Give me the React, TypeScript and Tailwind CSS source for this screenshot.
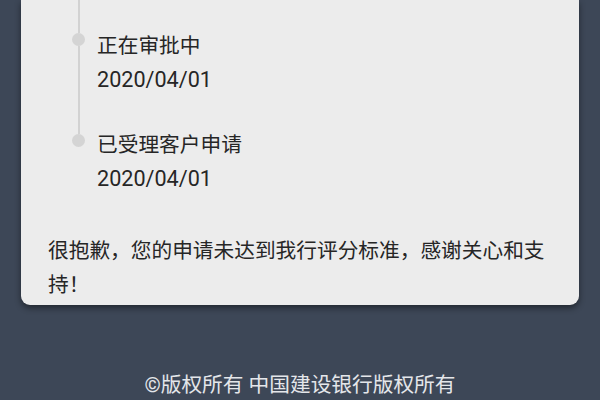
import React from "react";

const items = [
  { title: "正在审批中", date: "2020/04/01" },
  { title: "已受理客户申请", date: "2020/04/01" },
];

export default function App() {
  return (
    <div
      className="w-[600px] h-[400px] overflow-hidden bg-[#3d4757] flex flex-col"
      style={{ fontFamily: 'Roboto, "Noto Sans CJK SC", "Noto Sans", sans-serif' }}
    >
      <div className="mx-[21px] bg-[#ececec] rounded-b-[9px] shadow-[0_3px_6px_rgba(0,0,0,0.45)] text-[#262626] text-[20.7px] leading-[34px]">
        <div className="flex flex-col">
          {items.map((it, i) => {
            const first = i === 0;
            const last = i === items.length - 1;
            return (
              <div key={i} className={`flex ${first ? "pt-[29px]" : ""} ${last ? "" : "pb-[31px]"}`}>
                <div className="ml-[51px] w-[13px] flex flex-col items-center self-stretch">
                  {first ? (
                    <div className="w-[2px] h-[4px] bg-[#d2d2d2] -mt-[29px] pt-[29px] box-content" />
                  ) : (
                    <div className="w-[2px] h-[6px] bg-[#d2d2d2]" />
                  )}
                  <div className="w-[13px] h-[13px] rounded-full bg-[#d4d4d4] shrink-0" />
                  {!last && <div className="w-[2px] flex-1 bg-[#d2d2d2] -mb-[31px]" />}
                </div>
                <div className="ml-[12px] flex flex-col">
                  <div>{it.title}</div>
                  <div className="text-[21.6px]">{it.date}</div>
                </div>
              </div>
            );
          })}
        </div>
        <p className="mt-[38px] pl-[27px] pr-[27px] pb-[3px]">
          很抱歉，您的申请未达到我行评分标准，感谢关心和支持！
        </p>
      </div>
      <div className="mt-[63px] text-center text-[#e4e6ea] text-[20.7px] leading-[34px]">
        ©版权所有 中国建设银行版权所有
      </div>
    </div>
  );
}
